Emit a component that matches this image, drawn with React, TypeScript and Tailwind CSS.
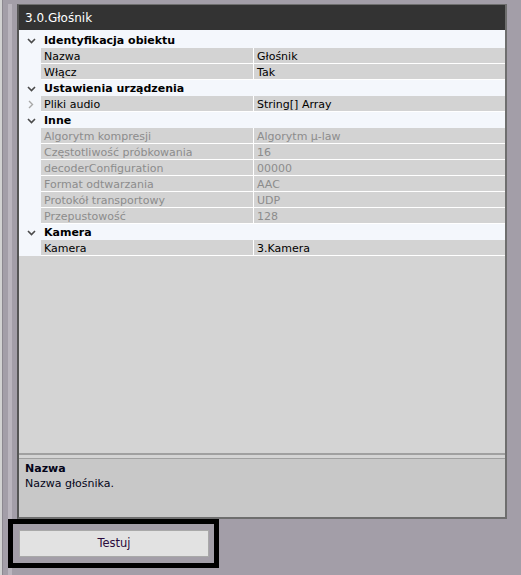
import React from 'react'

type Row =
  | { kind: 'group'; label: string }
  | { kind: 'item'; name: string; value: string; disabled?: boolean; expandable?: boolean }

const rows: Row[] = [
  { kind: 'group', label: 'Identyfikacja obiektu' },
  { kind: 'item', name: 'Nazwa', value: 'Głośnik' },
  { kind: 'item', name: 'Włącz', value: 'Tak' },
  { kind: 'group', label: 'Ustawienia urządzenia' },
  { kind: 'item', name: 'Pliki audio', value: 'String[] Array', expandable: true },
  { kind: 'group', label: 'Inne' },
  { kind: 'item', name: 'Algorytm kompresji', value: 'Algorytm µ-law', disabled: true },
  { kind: 'item', name: 'Częstotliwość próbkowania', value: '16', disabled: true },
  { kind: 'item', name: 'decoderConfiguration', value: '00000', disabled: true },
  { kind: 'item', name: 'Format odtwarzania', value: 'AAC', disabled: true },
  { kind: 'item', name: 'Protokół transportowy', value: 'UDP', disabled: true },
  { kind: 'item', name: 'Przepustowość', value: '128', disabled: true },
  { kind: 'group', label: 'Kamera' },
  { kind: 'item', name: 'Kamera', value: '3.Kamera' },
]

const ChevronDown = () => (
  <svg width="9" height="6" viewBox="0 0 9 6">
    <path d="M1 1 L4.5 4.5 L8 1" fill="none" stroke="#4a4a4a" strokeWidth="1.6" />
  </svg>
)

const ChevronRight = () => (
  <svg width="6" height="9" viewBox="0 0 6 9">
    <path d="M1 1 L4.5 4.5 L1 8" fill="none" stroke="#a8a8a8" strokeWidth="1.4" />
  </svg>
)

const PropRow = ({ row }: { row: Row }) => {
  if (row.kind === 'group') {
    return (
      <div className="flex h-4 bg-[#f4f7fc]">
        <div className="flex w-[22px] items-center justify-center pl-[2px] pt-px">
          <ChevronDown />
        </div>
        <div className="pl-[3px] pt-px text-[11px] font-bold leading-[15px] text-black">{row.label}</div>
      </div>
    )
  }
  const color = row.disabled ? 'text-[#8c8c8c]' : 'text-black'
  return (
    <div className="flex h-4">
      <div className="flex w-[22px] items-center justify-center bg-[#f4f7fc] pl-[2px]">
        {row.expandable && <ChevronRight />}
      </div>
      <div className={`flex flex-1 border-b border-white bg-[#d3d3d3] text-[11px] leading-[15px] ${color}`}>
        <div className="w-[213px] border-r border-white pl-[3px] pt-px whitespace-nowrap">{row.name}</div>
        <div className="flex-1 pl-[3px] pt-px whitespace-nowrap">{row.value}</div>
      </div>
    </div>
  )
}

export default function App() {
  return (
    <div className="flex h-[575px] w-[521px] overflow-hidden bg-[#a39ea8] font-['DejaVu_Sans',sans-serif]">
      {/* left edge strips */}
      <div className="flex h-full shrink-0">
        <div className="w-[2px] bg-[#d2d2d2]" />
        <div className="w-px bg-[#8c8890]" />
        <div className="w-[5px]" />
      </div>

      <div className="flex flex-1 flex-col">
        <div className="flex h-[519px] pt-[4px]">
          <div className="w-[4px] shrink-0 bg-[#bab5be]" />
          <div className="w-[5px] shrink-0" />

          {/* property panel */}
          <div className="flex w-[490px] flex-col border-t border-l-2 border-r-2 border-b-2 border-t-[#6f6f6f] border-l-[#555555] border-r-[#6e6e6e] border-b-[#6e6e6e]">
            <div className="flex h-[25px] items-center bg-[#333333] pl-[6px] text-[12px] text-white">
              3.0.Głośnik
            </div>

            <div className="flex flex-1 flex-col border-b-2 border-[#a0a0a0] bg-[#d4d4d4]">
              <div className="h-[2px] bg-[#f4f7fc]" />
              {rows.map((r, i) => (
                <PropRow key={i} row={r} />
              ))}
            </div>

            <div className="h-[3px] bg-[#d4d4d4]" />

            <div className="flex h-[59px] flex-col border-t border-[#a0a0a0] bg-[#c8c8c8] px-[6px] pt-[2px] text-[11px] leading-[15px] text-[#050518]">
              <div className="font-bold">Nazwa</div>
              <div>Nazwa głośnika.</div>
            </div>
          </div>
        </div>

        {/* test button */}
        <div className="flex h-[49px] w-[211px] border-[5px] border-black bg-[#a39ea8] pl-[6px] pt-[6px]">
          <button className="flex h-[27px] w-[190px] items-center justify-center border border-[#a9a9a9] bg-[#e2e2e2] text-[11.5px] text-[#2a0a3c]">
            Testuj
          </button>
        </div>

        <div className="flex flex-1">
          <div className="w-[4px] bg-[#bab5be]" />
        </div>
      </div>
    </div>
  )
}
